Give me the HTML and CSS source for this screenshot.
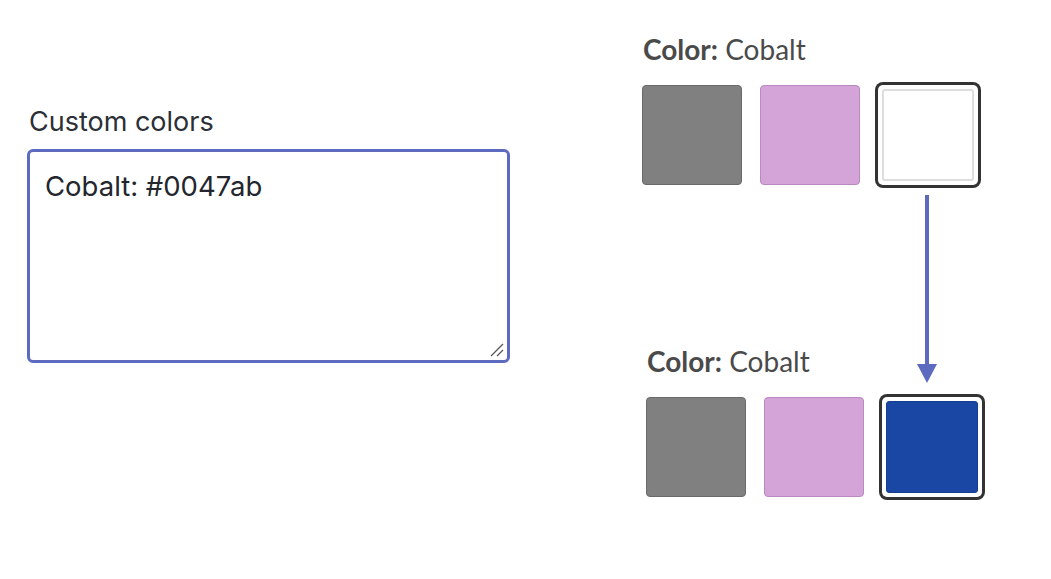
FILE: index.html
```html
<!DOCTYPE html>
<html lang="en">
<head>
<meta charset="utf-8">
<title>Custom colors</title>
<link rel="stylesheet" href="styles.css">
</head>
<body>
<main class="page">
  <section class="editor">
    <label class="field-label" for="custom">Custom colors</label>
    <div class="field-box">
      <textarea id="custom" class="field-input" spellcheck="false">Cobalt: #0047ab</textarea>
      <svg class="field-grip" width="14" height="14" viewBox="0 0 14 14" aria-hidden="true">
        <line x1="1" y1="13" x2="13" y2="1" stroke="#555" stroke-width="1.3"/>
        <line x1="7" y1="13" x2="13" y2="7" stroke="#555" stroke-width="1.3"/>
      </svg>
    </div>
  </section>

  <section class="pickers">
    <div class="picker">
      <div class="picker-title"><b>Color:</b> Cobalt</div>
      <div class="swatches">
        <div class="swatch swatch--gray"></div>
        <div class="swatch swatch--pink"></div>
        <div class="swatch swatch--selected"><div class="swatch-fill swatch-fill--empty"></div></div>
      </div>
    </div>

    <svg class="connector" width="20" height="188" viewBox="0 0 20 188" aria-hidden="true">
      <rect x="8" y="0" width="4" height="172" fill="#5c6bc0"/>
      <polygon points="0,169 20,169 10,188" fill="#5c6bc0"/>
    </svg>

    <div class="picker picker--after">
      <div class="picker-title"><b>Color:</b> Cobalt</div>
      <div class="swatches">
        <div class="swatch swatch--gray"></div>
        <div class="swatch swatch--pink"></div>
        <div class="swatch swatch--selected"><div class="swatch-fill swatch-fill--cobalt"></div></div>
      </div>
    </div>
  </section>
</main>
</body>
</html>
```

FILE: styles.css
```css
* { box-sizing: border-box; }

html, body {
  margin: 0;
  padding: 0;
  background: #ffffff;
}

.page {
  display: flex;
  align-items: flex-start;
  padding-left: 27px;
  width: 1051px;
  height: 579px;
}

.editor {
  display: flex;
  flex-direction: column;
  width: 483px;
  margin-top: 106px;
}

.field-label {
  font-family: "Inter", "Noto Sans", sans-serif;
  font-size: 27px;
  line-height: 32px;
  color: #2c2f36;
  padding-left: 2px;
  margin-bottom: 11px;
}

.field-box {
  position: relative;
  width: 483px;
  height: 214px;
}

.field-input {
  display: block;
  width: 483px;
  height: 214px;
  margin: 0;
  border: 3px solid #5c6bc0;
  border-radius: 6px;
  padding: 17px 15px;
  font-family: "Inter", "Noto Sans", sans-serif;
  font-size: 27.5px;
  color: #23262d;
  background: #ffffff;
  outline: none;
  resize: none;
}

.field-grip {
  position: absolute;
  right: 6px;
  bottom: 6px;
}

.pickers {
  position: relative;
  margin-left: 132px;
  margin-top: 32px;
  display: flex;
  flex-direction: column;
  gap: 159px;
}

.picker-title {
  font-family: "Lato", "Noto Sans", sans-serif;
  font-size: 28px;
  line-height: 34px;
  color: #4a4a4a;
  margin-bottom: 19px;
  padding-left: 1px;
}

.picker-title b {
  font-weight: 700;
}

.picker--after {
  margin-left: 4px;
}

.swatches {
  display: flex;
  gap: 18px;
}

.swatch {
  width: 100px;
  height: 100px;
  border-radius: 4px;
  border: 1px solid transparent;
}

.swatch--gray {
  background: #808080;
  border-color: #6a6a6a;
}

.swatch--pink {
  background: #d4a3d8;
  border-color: #b98ac0;
}

.swatch--selected {
  border: none;
  border-radius: 5px;
  background: #ffffff;
  box-shadow: 0 0 0 3px #333333;
  padding: 4px;
}

.swatch-fill {
  width: 92px;
  height: 92px;
  border-radius: 3px;
}

.swatch-fill--empty {
  background: #ffffff;
  border: 2px solid #dddddd;
}

.swatch-fill--cobalt {
  background: #1a47a3;
  border: 1px solid #163d8e;
}

.connector {
  position: absolute;
  left: 275px;
  top: 163px;
}
```
